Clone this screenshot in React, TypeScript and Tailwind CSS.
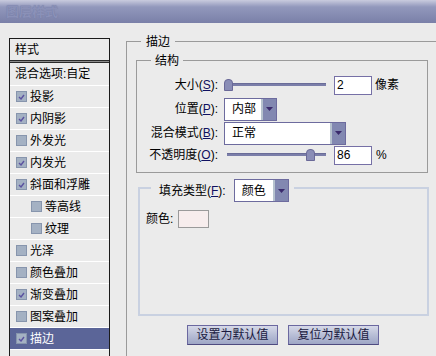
import React from "react";

const FONT = '"Liberation Sans", "Noto Sans CJK SC", sans-serif';

function Check({ checked }: { checked: boolean }) {
  return (
    <span className="w-[11px] h-[11px] border border-[#8795ad] bg-[#a4b1c3] flex items-center justify-center shrink-0">
      {checked && (
        <svg width="7" height="6" viewBox="0 0 7 6">
          <path d="M1 3 L3 5 L6 1" stroke="#5b52a0" strokeWidth="1.4" fill="none" />
        </svg>
      )}
    </span>
  );
}

const items = [
  { t: "投影", c: true },
  { t: "内阴影", c: true },
  { t: "外发光", c: false },
  { t: "内发光", c: true },
  { t: "斜面和浮雕", c: true },
  { t: "等高线", c: false, indent: true },
  { t: "纹理", c: false, indent: true },
  { t: "光泽", c: false },
  { t: "颜色叠加", c: false },
  { t: "渐变叠加", c: true },
  { t: "图案叠加", c: false },
  { t: "描边", c: true, sel: true },
];

function Acc({ k }: { k: string }) {
  return (
    <span>
      (<span className="underline text-[#101060]">{k}</span>):
    </span>
  );
}

function Arrow() {
  return (
    <div className="flex h-full">
      <div className="w-[2px] h-full bg-[#b6c2ce]" />
      <div className="w-[13px] h-full bg-[#8288b1] flex items-center justify-center">
        <svg width="7" height="4" viewBox="0 0 7 4">
          <path d="M0 0 H7 L3.5 4 Z" fill="#3a2a6c" />
        </svg>
      </div>
    </div>
  );
}

function Dropdown({ w, text, h = 23 }: { w: number; text: string; h?: number }) {
  return (
    <div
      className="border border-[#6d6b9e] bg-white flex items-stretch box-border"
      style={{ width: w, height: h }}
    >
      <div className="flex-1 flex items-center pl-[7px] text-[12px] text-black">{text}</div>
      <Arrow />
    </div>
  );
}

function Slider({ pos, trackLeft }: { pos: number; trackLeft: number }) {
  return (
    <div className="relative w-[102px] h-[16px]">
      <div
        className="absolute right-0 top-[6px] h-[3px] bg-[#7b7ea9] border-t border-[#6a6c98]"
        style={{ left: trackLeft }}
      />
      <div
        className="absolute top-[2px] w-[9px] h-[12px] rounded-t-[4px] bg-[#8a8db6] border border-[#6a6998]"
        style={{ left: pos }}
      />
    </div>
  );
}

function Input({ v }: { v: string }) {
  return (
    <div className="w-[38px] h-[19px] border border-[#7670a6] bg-white flex items-center pl-[2px] text-[12px] text-black">
      {v}
    </div>
  );
}

function Btn({ text }: { text: string }) {
  return (
    <div className="w-[91px] h-[20px] border border-[#6b68a0] border-b-[#4e4a80] bg-[linear-gradient(to_bottom,#d6d9e8,#b8bed6_50%,#9ea6c6)] flex items-center justify-center text-[12px] text-[#1a1a40]">
      {text}
    </div>
  );
}

export default function App() {
  return (
    <div
      className="w-[436px] h-[356px] bg-[#ebebeb] overflow-hidden text-[12px] text-black"
      style={{ fontFamily: FONT }}
    >
      {/* title bar */}
      <div className="h-[23px] bg-[linear-gradient(to_bottom,#c9cbde,#9298bc_30%,#7a80a8)] flex items-center pl-[6px]">
        <span className="text-[13px] font-bold text-[#8b91b8] [text-shadow:0_0_1px_#6e76a0] leading-none">
          图层样式
        </span>
      </div>

      <div className="flex">
        {/* left list */}
        <div className="shrink-0 ml-[9px] mt-[15px] w-[101px] border border-b-0 border-[#1b1b1b]">
          <div className="h-[21px] pl-[5px] flex items-center">样式</div>
          <div className="h-[3px] border-y border-[#2a2a2a] bg-[#8c8c8c]" />
          <div className="h-[22px] pl-[5px] flex items-center">混合选项:自定</div>
          {items.map((it) => (
            <div
              key={it.t}
              className={
                "h-[22px] border-t border-white flex items-center gap-[3px] " +
                (it.indent ? "pl-[21px] " : "pl-[6px] ") +
                (it.sel ? "bg-[#5b6598] text-white" : "")
              }
            >
              <Check checked={it.c} />
              <span>{it.t}</span>
            </div>
          ))}
          <div className="h-[22px] border-t border-white" />
        </div>

        {/* right panel */}
        <div className="shrink-0 ml-[16px] mt-[18px] relative w-[330px] h-[330px] border-l border-t border-[#9a9a9a] pl-[9px] pt-[18px]">
          <span className="absolute left-[14px] -top-[8px] px-[5px] leading-[16px] bg-[#ebebeb]">描边</span>

          {/* 结构 */}
          <div className="relative w-[292px] h-[113px] border border-[#9a9a9a] pt-[12px]">
            <span className="absolute left-[14px] -top-[8px] px-[4px] leading-[16px] bg-[#ebebeb]">结构</span>

            <div className="h-[24px] flex items-center">
              <div className="w-[81px] text-right">
                大小<Acc k="S" />
              </div>
              <div className="ml-[6px]">
                <Slider pos={0} trackLeft={3} />
              </div>
              <div className="ml-[8px]">
                <Input v="2" />
              </div>
              <span className="ml-[3px]">像素</span>
            </div>

            <div className="h-[24px] flex items-center">
              <div className="w-[81px] text-right">
                位置<Acc k="P" />
              </div>
              <div className="ml-[6px]">
                <Dropdown w={53} text="内部" />
              </div>
            </div>

            <div className="h-[24px] flex items-center">
              <div className="w-[81px] text-right">
                混合模式<Acc k="B" />
              </div>
              <div className="ml-[6px]">
                <Dropdown w={122} text="正常" />
              </div>
            </div>

            <div className="h-[20px] flex items-center">
              <div className="w-[81px] text-right">
                不透明度<Acc k="O" />
              </div>
              <div className="ml-[6px]">
                <Slider pos={82} trackLeft={3} />
              </div>
              <div className="ml-[8px]">
                <Input v="86" />
              </div>
              <span className="ml-[4px]">%</span>
            </div>
          </div>

          {/* 填充类型 */}
          <div className="relative ml-[2px] mt-[14px] w-[291px] h-[129px] border-2 border-[#c9d1e1] pt-[21px] pl-[6px]">
            <div className="absolute left-[11px] -top-[10px] h-[23px] flex items-center pl-[8px] pr-[5px] bg-[#ebebeb]">
              <span>
                填充类型<Acc k="F" />
              </span>
              <div className="ml-[8px]">
                <Dropdown w={55} text="颜色" />
              </div>
            </div>
            <div className="flex items-center">
              <span>颜色:</span>
              <div className="ml-[5px] w-[31px] h-[18px] border border-[#9a9a9a] bg-[#f7eded]" />
            </div>
          </div>

          {/* buttons */}
          <div className="mt-[9px] ml-[51px] flex gap-[10px]">
            <Btn text="设置为默认值" />
            <Btn text="复位为默认值" />
          </div>
        </div>
      </div>
    </div>
  );
}
